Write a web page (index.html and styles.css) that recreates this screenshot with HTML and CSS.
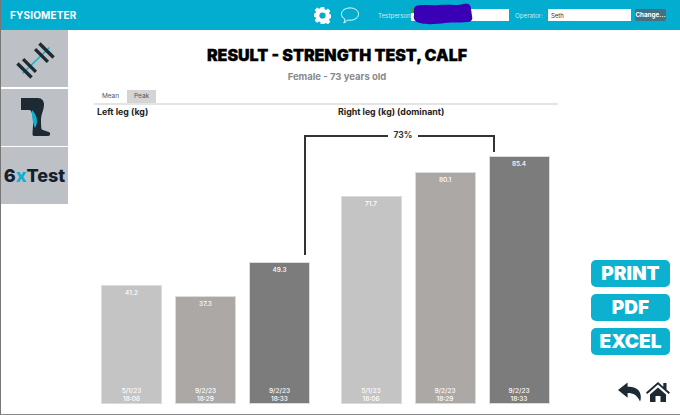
FILE: index.html
```html
<!DOCTYPE html>
<html lang="en">
<head>
  <meta charset="UTF-8" />
  <title>Fysiometer</title>
  <link rel="stylesheet" href="styles.css">
</head>
<body>
  <div class="app">

    <!-- Top bar -->
    <header class="topbar">
      <div class="brand">FYSIOMETER</div>
      <svg class="gear" viewBox="0 0 24 24"><path fill="#fff" fill-rule="evenodd" d="M9.6 0h4.8l.6 3.3 1.9.8 2.8-1.9 3.4 3.4-1.9 2.8.8 1.9 3 .6v4.8l-3 .6-.8 1.9 1.9 2.8-3.4 3.4-2.8-1.9-1.9.8-.6 3.200H9.600L9 21.300l-1.900-.8-2.800 1.900-3.400-3.400 1.900-2.800-.8-1.900-3-.6V9.400l3-.6.8-1.900-1.900-2.800 3.400-3.400 2.800 1.900 1.900-.8zM12 7.600a4.400 4.400 0 1 0 0 8.800 4.400 4.400 0 0 0 0-8.800z"/></svg>
      <svg class="chat" viewBox="0 0 20 18"><path fill="none" stroke="#fff" stroke-width="1" d="M10 1c5 0 9 2.600 9 6.500S15 14 10 14c-1 0-1.800-.1-2.600-.3C6.400 15.200 5 16.400 3.400 16.800c.8-1 1.300-2.200 1.300-3.800C2.500 11.800 1 9.800 1 7.500 1 3.600 5 1 10 1z"/></svg>
      <label class="field-label testperson-label">Testperson:</label>
      <div class="testperson">
        <span class="status-dot"></span>
        <input class="field testperson-input" type="text" />
        <svg class="scribble" viewBox="0 0 60 22"><path fill="#3a00b5" d="M3 3C10 1 18 3 26 2 36 1 44 3 50 1c6-1 8 1 8 5l1 7c1 4-1 6-5 6-8 1-14 0-22 1-8 1-18 2-25 0C2 19 0 16 1 12 1 8 0 5 3 3z"/></svg>
      </div>
      <label class="field-label operator-label">Operator:</label>
      <input class="field operator-input" type="text" value="Seth" />
      <button class="change-btn">Change...</button>
    </header>

    <div class="content">

      <!-- Side tiles -->
      <nav class="sidebar">
        <div class="tile">
          <svg class="tile-icon" viewBox="0 0 56 56">
            <path stroke="#0fb0d4" stroke-width="1.500" d="M15.500 42.500 42.500 16.500"/>
            <g fill="#1d2a33">
              <rect x="-10" y="-1.700" width="20" height="3.400" transform="translate(39.500 19.500) rotate(45)"/>
              <rect x="-9" y="-1.700" width="18" height="3.400" transform="translate(34.500 24.500) rotate(45)"/>
              <rect x="-10" y="-1.700" width="20" height="3.400" transform="translate(17.500 39.500) rotate(45)"/>
              <rect x="-9" y="-1.700" width="18" height="3.400" transform="translate(22.500 34.500) rotate(45)"/>
            </g>
          </svg>
        </div>
        <div class="tile">
          <svg class="tile-icon" viewBox="0 0 56 56">
            <path fill="#1d2a33" d="M14 9h17c4 0 6 3 6 7 0 5-3 9-3 14 0 4 0 7 .5 10 2 2 7 2 8.500 4 .5 2-.5 3-2 3H27c-1 0-1.500-1-1.500-2 0-5 1-9 .5-14-.3-4-1-7-2-9-.5-1-1.500-1-3-1H14z"/>
            <path fill="#0fb0d4" d="M25 21c3 3 5 7 5 11 0 3-1 5-2 7-1-2-2-5-2.500-9-.3-3-1-6-.5-9z"/>
          </svg>
        </div>
        <div class="tile six-x">6<span class="x">x</span>Test</div>
      </nav>

      <!-- Result -->
      <main class="result">
        <h1 class="title">RESULT - STRENGTH TEST, CALF</h1>
        <p class="subtitle">Female - 73 years old</p>
        <div class="tabs">
          <div class="tab">Mean</div>
          <div class="tab tab-peak">Peak</div>
        </div>
        <div class="leg-titles">
          <div class="leg-title">Left leg (kg)</div>
          <div class="leg-title">Right leg (kg) (dominant)</div>
        </div>

        <div class="chart">
          <div class="bracket">
            <span class="bracket-label">73%</span>
          </div>
          <div class="leg">
            <div class="bar bar-first" style="height:119px"><span>41.2</span><span class="bar-date">5/1/23<br>18:06</span></div>
            <div class="bar bar-second" style="height:108px"><span>37.3</span><span class="bar-date">9/2/23<br>18:29</span></div>
            <div class="bar bar-third" style="height:142px"><span>49.3</span><span class="bar-date">9/2/23<br>18:33</span></div>
          </div>
          <div class="leg">
            <div class="bar bar-first" style="height:208px"><span>71.7</span><span class="bar-date">5/1/23<br>18:06</span></div>
            <div class="bar bar-second" style="height:232px"><span>80.1</span><span class="bar-date">9/2/23<br>18:29</span></div>
            <div class="bar bar-third" style="height:248px"><span>85.4</span><span class="bar-date">9/2/23<br>18:33</span></div>
          </div>
        </div>
      </main>

      <!-- Export buttons and navigation -->
      <aside class="actions">
        <button class="export-btn">PRINT</button>
        <button class="export-btn">PDF</button>
        <button class="export-btn">EXCEL</button>
        <div class="nav-icons">
          <svg class="back-icon" viewBox="0 0 24 20"><path fill="#1d2a33" d="M10 0 0 8l10 8v-5c6 0 10 2 13 9 1-3 1-5 .5-7.500C22 6 16 4.500 10 4.500z"/></svg>
          <svg class="home-icon" viewBox="0 0 24 20"><path fill="#1d2a33" d="M12 0 0 10.500l1.300 1.400L12 2.600l10.700 9.300 1.300-1.400-3.500-3V1h-3.200v3.700zM4 12.500V20h5.500v-6h5v6H20v-7.500l-8-7z"/></svg>
        </div>
      </aside>
    </div>
  </div>
</body>
</html>
```

FILE: styles.css
```css
* {
  box-sizing: border-box;
  margin: 0;
  padding: 0;
}

body {
  font-family: 'Inter', 'Liberation Sans', sans-serif;
  background: white;
}

.app {
  width: 680px;
  height: 415px;
  display: flex;
  flex-direction: column;
  border-left: 1px solid #777;
  border-bottom: 1px solid #888;
  overflow: hidden;
}

/* Top bar */
.topbar {
  height: 30px;
  flex: none;
  background: #02adcf;
  display: flex;
  align-items: center;
  color: white;
}

.brand {
  width: 313px;
  padding-left: 9px;
  font-size: 10px;
  font-weight: 700;
  letter-spacing: 0.15px;
}

.gear {
  width: 17px;
  height: 17px;
}

.chat {
  width: 20px;
  height: 17px;
  margin-left: 9px;
}

.field-label {
  font-size: 6.200px;
  color: #cdeaf2;
}

.testperson-label {
  margin-left: 18px;
  width: 33px;
}

.testperson {
  position: relative;
  display: flex;
  height: 12px;
  width: 98px;
}

.status-dot {
  position: absolute;
  left: 0;
  top: -1px;
  width: 5px;
  height: 5px;
  background: #3aa83a;
}

.testperson-input {
  width: 98px;
}

.scribble {
  position: absolute;
  left: 2px;
  top: -6px;
  width: 60px;
  height: 22px;
}

.field {
  height: 12px;
  border: none;
  background: white;
  font-family: inherit;
  font-size: 6px;
  color: #333;
  padding-left: 3px;
}

.operator-label {
  margin-left: 6px;
  width: 33px;
}

.operator-input {
  width: 83px;
}

.change-btn {
  width: 31px;
  height: 12px;
  margin-left: 4px;
  background: #466f80;
  border: none;
  border-radius: 2px;
  color: white;
  font-family: inherit;
  font-size: 6.300px;
  font-weight: 700;
}

.content {
  flex: 1;
  display: flex;
  min-height: 0;
}

/* Side tiles */
.sidebar {
  width: 67px;
  flex: none;
  display: flex;
  flex-direction: column;
  gap: 1.500px;
}

.tile {
  height: 57px;
  background: #bdc1c6;
  display: flex;
  align-items: center;
  justify-content: center;
}

.tile-icon {
  width: 56px;
  height: 56px;
}

.six-x {
  font-size: 18px;
  font-weight: 800;
  color: #14202b;
}

.x {
  color: #0fb0d4;
}

/* Result */
.result {
  width: 486px;
  flex: none;
  margin-left: 26px;
  display: flex;
  flex-direction: column;
}

.title {
  margin-top: 15px;
  font-size: 16px;
  font-weight: 900;
  line-height: 20px;
  text-align: center;
  color: black;
  -webkit-text-stroke: 0.3px black;
}

.subtitle {
  margin-top: 6px;
  font-size: 9.500px;
  font-weight: 700;
  line-height: 12px;
  text-align: center;
  color: #8a8a8a;
}

.tabs {
  width: 464px;
  margin-top: 7px;
  display: flex;
  border-bottom: 2px solid #e4e4e4;
}

.tab {
  width: 33px;
  height: 13px;
  font-size: 6.500px;
  line-height: 13px;
  text-align: center;
  color: #555;
}

.tab-peak {
  width: 29px;
  background: #d4d4d4;
}

.leg-titles {
  display: flex;
  margin-top: 1px;
  padding-left: 3px;
}

.leg-title {
  width: 241px;
  font-size: 8.800px;
  font-weight: 700;
  line-height: 12px;
  color: #222;
}

/* Bars stand on the bottom edge of the chart */
.chart {
  position: relative;
  flex: 1;
  display: flex;
  align-items: flex-end;
  padding-left: 7px;
  padding-bottom: 10px;
}

.leg {
  width: 241px;
  display: flex;
  align-items: flex-end;
  gap: 13px;
}

.bar {
  width: 61px;
  display: flex;
  flex-direction: column;
  justify-content: space-between;
  align-items: center;
  padding: 3px 0 0;
  border: 1px solid #dcdcdc;
  color: white;
  font-size: 6.500px;
  font-weight: 500;
  line-height: 8px;
  text-align: center;
}

.bar-first {
  background: #c4c4c4;
}

.bar-second {
  background: #aca8a6;
}

.bar-third {
  background: #7c7c7c;
}

/* The bracket between the best left and right bars */
.bracket {
  position: absolute;
  left: 210px;
  top: 17px;
  width: 191px;
  height: 120px;
  border-left: 2px solid #333;
  border-top: 2px solid #333;
}

.bracket::after {
  content: "";
  position: absolute;
  right: 0;
  top: -2px;
  width: 2px;
  height: 17px;
  background: #333;
}

.bracket-label {
  position: absolute;
  left: 82px;
  top: -8px;
  width: 30px;
  background: white;
  font-size: 8.500px;
  font-weight: 700;
  line-height: 12px;
  text-align: center;
  color: #333;
}

/* Export buttons and navigation */
.actions {
  flex: 1;
  display: flex;
  flex-direction: column;
  align-items: flex-start;
  padding-left: 11px;
  padding-top: 230px;
}

.export-btn {
  width: 79px;
  height: 27px;
  margin-bottom: 7px;
  background: #0cb1cf;
  border: none;
  border-radius: 5px;
  color: white;
  font-family: inherit;
  font-size: 19px;
  font-weight: 900;
}

.nav-icons {
  display: flex;
  gap: 5px;
  margin-top: 20px;
  margin-left: 27px;
}

.back-icon {
  width: 23px;
  height: 20px;
}

.home-icon {
  width: 24px;
  height: 20px;
}
```
